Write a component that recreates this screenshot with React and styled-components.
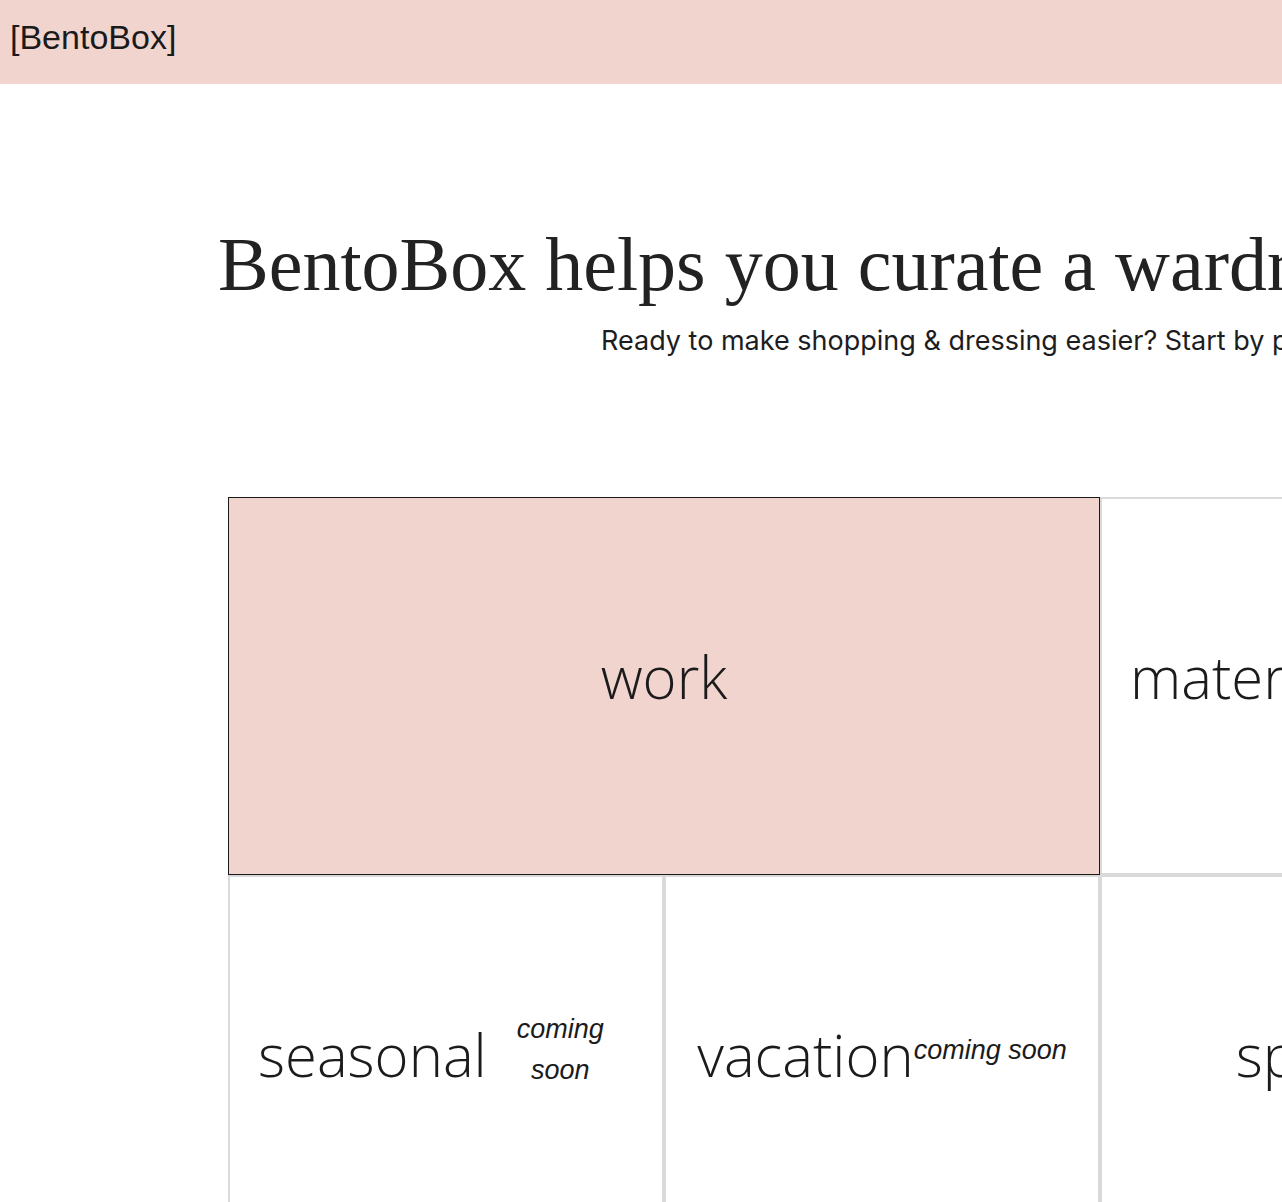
import React from 'react'
import styled, { createGlobalStyle } from 'styled-components'

const GlobalStyle = createGlobalStyle`
  html, body {
    margin: 0;
    padding: 0;
    background: #fff;
    overflow: hidden;
  }
  body {
    font-family: "Inter", "Liberation Sans", sans-serif;
    color: #212529;
  }
`

const Page = styled.div`
  width: 1282px;
  min-height: 1202px;
  overflow: hidden;
`

const TopBar = styled.header`
  height: 84px;
  background: #f2d4cf;
  display: flex;
  align-items: center;
  padding: 0 10px 10px;
  box-sizing: border-box;
`

const Brand = styled.span`
  font-family: "Liberation Sans", Arial, sans-serif;
  font-size: 34px;
  color: #1a1a1a;
`

const Hero = styled.section`
  padding-top: 137px;
  white-space: nowrap;
`

const Headline = styled.h1`
  margin: 0;
  padding-left: 218px;
  font-family: "Liberation Serif", "DejaVu Serif", serif;
  font-weight: 400;
  font-size: 76px;
  line-height: 86px;
  color: #222;
`

const Lead = styled.p`
  margin: 16px 0 0;
  padding-left: 601px;
  font-size: 27px;
  line-height: 36px;
  color: #1d1d1f;
`

const Board = styled.div`
  margin: 138px 0 0 228px;
  display: grid;
  grid-template-columns: repeat(3, 436px);
  grid-auto-rows: 378px;
`

const Tile = styled.div`
  grid-column: span ${({ $span }) => $span || 1};
  display: flex;
  align-items: center;
  justify-content: center;
  padding: 0 28px 20px;
  box-sizing: border-box;
  background: ${({ $active }) => ($active ? '#f2d4cf' : '#fff')};
  border: ${({ $active }) => ($active ? '1px solid #1a1a1a' : '2px solid #d9d9d9')};
  min-width: 0;
`

const Label = styled.div`
  display: flex;
  align-items: center;
  min-width: 0;
`

const Word = styled.span`
  font-family: "Open Sans", "Lato", sans-serif;
  font-weight: 300;
  font-size: 58px;
  color: #1b1b1b;
  white-space: nowrap;
  flex-shrink: 0;
`

const Soon = styled.span`
  font-family: "Liberation Sans", Arial, sans-serif;
  font-style: italic;
  font-size: 27px;
  line-height: 41px;
  text-align: center;
  margin-bottom: 8px;
  min-width: 0;
  color: #1b1b1b;
`

const occasions = [
  { name: 'work', span: 2, active: true },
  { name: 'maternity', soon: true },
  { name: 'seasonal', soon: true },
  { name: 'vacation', soon: true },
  { name: 'sports' },
]

export default function App() {
  return (
    <Page>
      <GlobalStyle />
      <TopBar>
        <Brand>[BentoBox]</Brand>
      </TopBar>
      <Hero>
        <Headline>BentoBox helps you curate a wardrobe for every occasion.</Headline>
        <Lead>Ready to make shopping &amp; dressing easier? Start by picking an occasion below.</Lead>
      </Hero>
      <Board>
        {occasions.map(o => (
          <Tile key={o.name} $span={o.span} $active={o.active}>
            <Label>
              <Word>{o.name}</Word>
              {o.soon && <Soon>coming soon</Soon>}
            </Label>
          </Tile>
        ))}
      </Board>
    </Page>
  )
}
